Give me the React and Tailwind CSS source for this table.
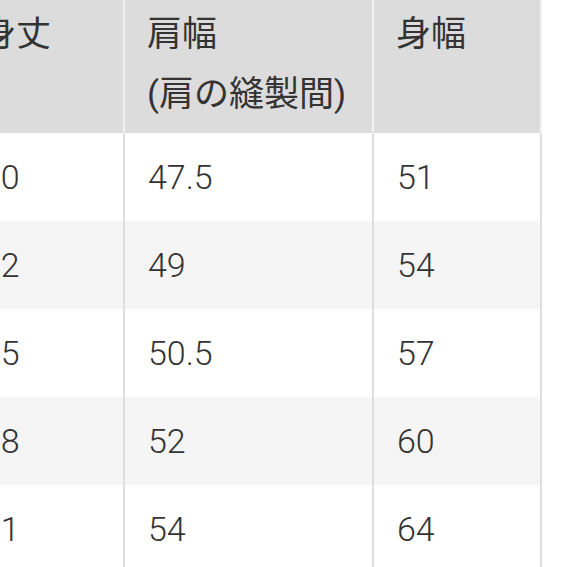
import React from "react";

const rows = [
  ["70", "47.5", "51"],
  ["72", "49", "54"],
  ["75", "50.5", "57"],
  ["78", "52", "60"],
  ["81", "54", "64"],
];

export default function App() {
  return (
    <div
      className="w-[567px] h-[567px] overflow-hidden bg-white text-[#333333]"
      style={{ fontFamily: 'Roboto, "Noto Sans CJK JP", sans-serif' }}
    >
      <div className="ml-[-41px] w-[583px] grid grid-cols-[166px_249px_168px]">
        <div className="h-[133px] bg-[#dcdcdc] border-r-2 border-[#f2f2f2] pl-[22px] pt-[5px] text-[35px] leading-[60px]">
          身丈
        </div>
        <div className="h-[133px] bg-[#dcdcdc] border-r-2 border-[#f2f2f2] pl-[22px] pt-[5px] text-[35px] leading-[60px]">
          肩幅
          <br />
          (肩の縫製間)
        </div>
        <div className="h-[133px] bg-[#dcdcdc] border-r-2 border-[#f2f2f2] pl-[22px] pt-[5px] text-[35px] leading-[60px]">
          身幅
        </div>
        {rows.map((r, i) =>
          r.map((v, j) => (
            <div
              key={i + "-" + j}
              className={
                "h-[88px] flex items-center border-r-2 border-[#dedede] pl-[23px] text-[34px] font-light " +
                (i % 2 === 1 ? "bg-[#f5f5f5]" : "bg-white")
              }
            >
              {v}
            </div>
          ))
        )}
      </div>
    </div>
  );
}
